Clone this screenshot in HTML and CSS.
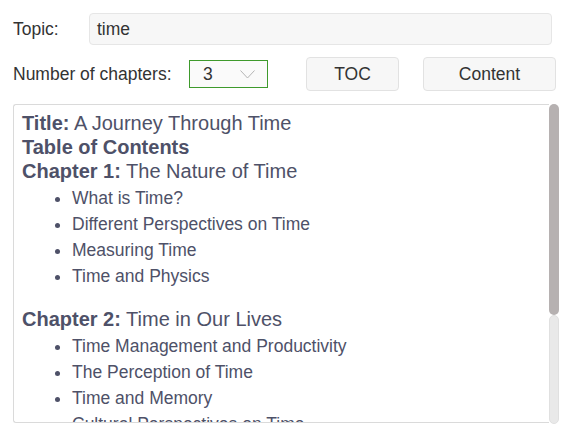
FILE: index.html
```html
<!DOCTYPE html>
<html>
<head>
<meta charset="utf-8">
<link rel="stylesheet" href="styles.css">
</head>
<body>
<div class="app">
  <div class="row row-topic">
    <label class="label label-topic">Topic:</label>
    <div class="input">time</div>
  </div>
  <div class="row row-controls">
    <label class="label label-chapters">Number of chapters:</label>
    <div class="select">
      <span class="select-value">3</span>
      <svg class="chevron" width="15" height="9" viewBox="0 0 15 9"><path d="M0.5 0.5 L7.5 8 L14.5 0.5" fill="none" stroke="#b4b4b4" stroke-width="1"/></svg>
    </div>
    <button class="btn btn-toc">TOC</button>
    <button class="btn btn-content">Content</button>
  </div>
  <div class="output">
    <div class="text">
      <div class="line"><b>Title:</b> A Journey Through Time</div>
      <div class="line"><b>Table of Contents</b></div>
      <div class="line"><b>Chapter 1:</b> The Nature of Time</div>
      <ul class="items">
        <li>What is Time?</li>
        <li>Different Perspectives on Time</li>
        <li>Measuring Time</li>
        <li>Time and Physics</li>
      </ul>
      <div class="line"><b>Chapter 2:</b> Time in Our Lives</div>
      <ul class="items">
        <li>Time Management and Productivity</li>
        <li>The Perception of Time</li>
        <li>Time and Memory</li>
        <li>Cultural Perspectives on Time</li>
      </ul>
      <div class="line"><b>Chapter 3:</b> The Future of Time</div>
      <ul class="items">
        <li>Time Travel: Science and Fiction</li>
        <li>Time in the Digital Age</li>
        <li>Embracing the Present</li>
      </ul>
    </div>
    <div class="scrollbar">
      <div class="thumb"></div>
      <div class="track"></div>
    </div>
  </div>
</div>
</body>
</html>
```

FILE: styles.css
```css
html, body {
  margin: 0;
  padding: 0;
  background: #ffffff;
}

body {
  font-family: "Liberation Sans", Arial, sans-serif;
  font-size: 17.5px;
  color: #333333;
}

.app {
  padding: 13px 0 0 13px;
  width: 546px;
}

.row {
  display: flex;
  align-items: center;
}

.row-topic {
  height: 32px;
}

.label-topic {
  width: 76px;
}

.input {
  box-sizing: border-box;
  width: 463px;
  height: 32px;
  line-height: 30px;
  padding-left: 7px;
  border: 1px solid #e6e6e6;
  border-radius: 4px;
  background: #f7f7f7;
  color: #333333;
}

.row-controls {
  margin-top: 12px;
  height: 34px;
}

.label-chapters {
  width: 176px;
}

.select {
  box-sizing: border-box;
  width: 79px;
  height: 28px;
  border: 1px solid #3e9a2c;
  background: #fafafa;
  display: flex;
  align-items: center;
  padding-left: 13px;
}

.select-value {
  width: 37px;
  color: #333333;
}

.chevron {
  display: block;
  margin-top: 1px;
}

.btn {
  box-sizing: border-box;
  height: 34px;
  border: 1px solid #e2e2e2;
  border-radius: 4px;
  background: #f7f7f7;
  font-family: "Liberation Sans", Arial, sans-serif;
  font-size: 17.5px;
  color: #333333;
  padding: 0;
}

.btn-toc {
  width: 93px;
  margin-left: 38px;
}

.btn-content {
  width: 133px;
  margin-left: 24px;
}

.output {
  margin-top: 13px;
  width: 546px;
  display: flex;
  align-items: flex-start;
}

.text {
  box-sizing: border-box;
  flex: 1;
  height: 319px;
  border: 1px solid #dadada;
  border-right: none;
  border-radius: 3px 0 0 3px;
  padding: 6px 0 0 8px;
  overflow: hidden;
  color: #4e5168;
}

.scrollbar {
  width: 10px;
  height: 320px;
  display: flex;
  flex-direction: column;
}

.thumb {
  height: 211px;
  background: #b6b1b1;
  border-radius: 5px;
}

.track {
  flex: 1;
  box-sizing: border-box;
  background: #e9e9e9;
  border: 1px solid #e0e0e0;
  border-radius: 5px;
}

.line {
  font-size: 20px;
  line-height: 24px;
}

.line b {
  font-weight: bold;
}

.items {
  margin: 2px 0 18px 0;
  padding-left: 50px;
  font-size: 17.5px;
  line-height: 26px;
  list-style: disc;
}
```
